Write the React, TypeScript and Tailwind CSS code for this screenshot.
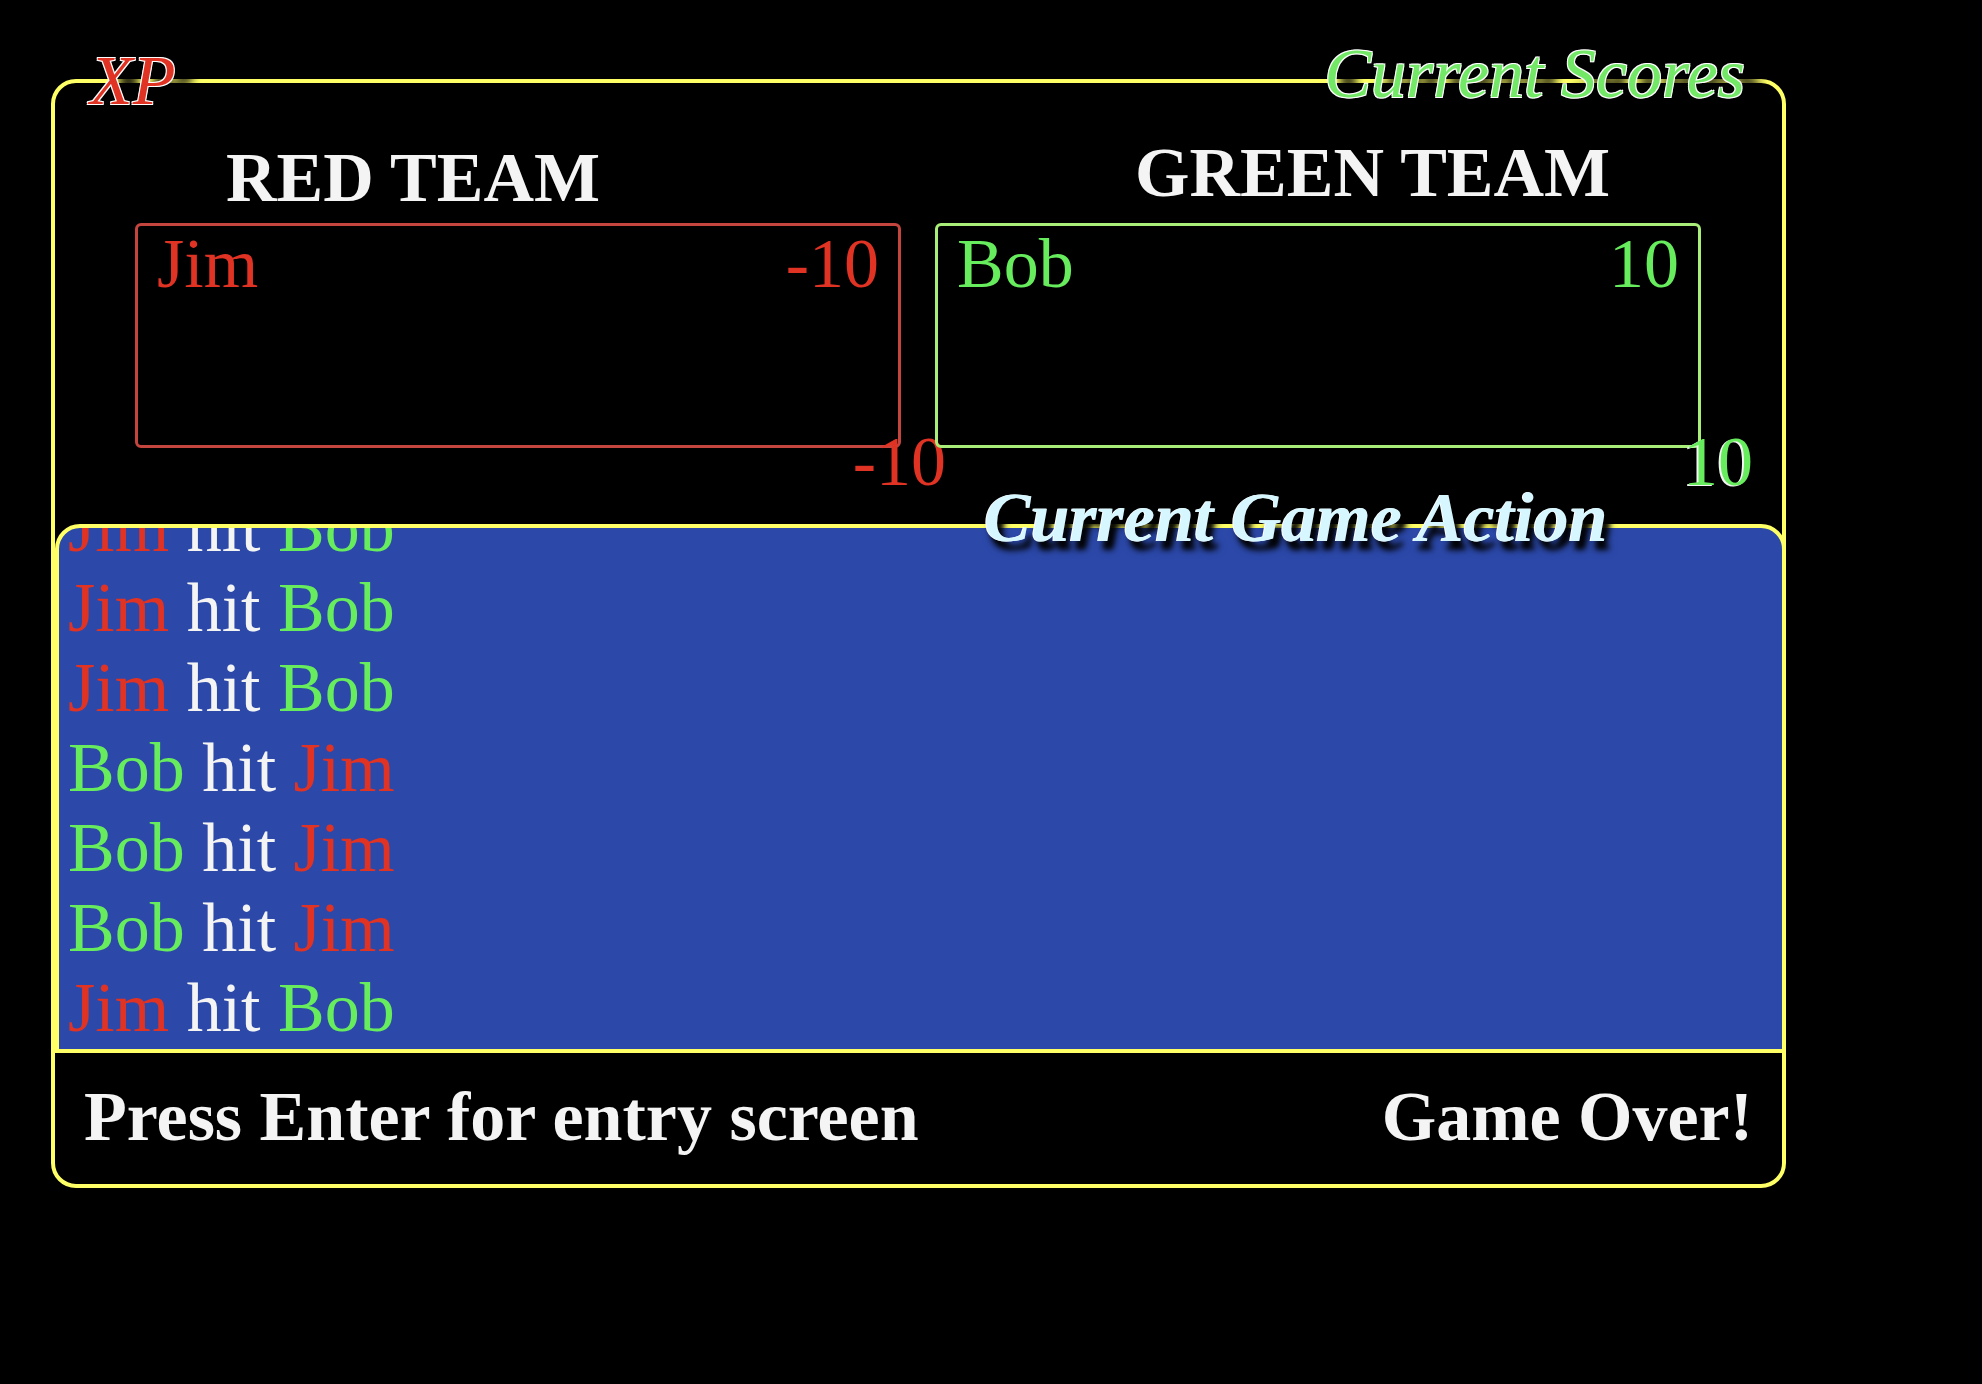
const RED = "text-[#e03324]";
const GREEN = "text-[#66ec5c]";
const WHITE = "text-[#f4f4f4]";

// newest hit is at the bottom; the list is pinned to the bottom of the panel
const hits: Array<[string, string]> = [
  ["Bob", "Jim"],
  ["Jim", "Bob"],
  ["Jim", "Bob"],
  ["Jim", "Bob"],
  ["Bob", "Jim"],
  ["Bob", "Jim"],
  ["Bob", "Jim"],
  ["Jim", "Bob"],
];

const teamColor = (name: string) => (name === "Jim" ? RED : GREEN);

function TeamColumn({
  title,
  player,
  score,
  total,
  headPad,
  boxBorder,
  color,
  totalClass,
}: {
  title: string;
  player: string;
  score: string;
  total: string;
  headPad: string;
  boxBorder: string;
  color: string;
  totalClass: string;
}) {
  return (
    <div className={`flex w-[766px] flex-col ${headPad}`}>
      <div className={`font-bold ${WHITE} whitespace-nowrap`}>{title}</div>
      <div
        className={`flex h-[225px] justify-between rounded-[6px] border-[3px] px-[19px] leading-[76px] ${boxBorder} ${color}`}
      >
        <span>{player}</span>
        <span>{score}</span>
      </div>
      <div className={`-mt-[26px] flex justify-end whitespace-nowrap ${totalClass}`}>
        {total}
      </div>
    </div>
  );
}

export default function App() {
  return (
    <div className="min-h-[1384px] w-full bg-black pl-[51px] pt-[79px] font-['Liberation_Serif','Times_New_Roman',Times,serif] text-[70px] leading-[80px]">
      <div className="relative w-[1735px] rounded-[25px] border-4 border-[#ffff66]">
        <span className="absolute -top-[42px] left-[35px] italic text-[#e03324] [text-shadow:-1px_1px_0_#fff,1px_-1px_0_#fff,-1px_-1px_0_#fff,1px_1px_0_#fff,16px_2px_12px_#000,16px_2px_12px_#000]">
          XP
        </span>
        <span className="absolute -top-[49px] right-[37px] italic text-[#72e866] [text-shadow:-1px_1px_0_#fff,1px_-1px_0_#fff,-1px_-1px_0_#fff,1px_1px_0_#fff,16px_2px_12px_#000,16px_2px_12px_#000]">
          Current Scores
        </span>

        <div className="flex h-[441px] gap-[34px] pl-[80px]">
          <TeamColumn
            title="RED TEAM"
            player="Jim"
            score="-10"
            total="-10"
            headPad="pt-[55px] [&>div:first-child]:pl-[91px] [&>div:nth-child(2)]:mt-[5px]"
            boxBorder="border-[#c4453e]"
            color={RED}
            totalClass={`-mr-[45px] ${RED}`}
          />
          <TeamColumn
            title="GREEN TEAM"
            player="Bob"
            score="10"
            total="10"
            headPad="pt-[50px] [&>div:first-child]:pl-[200px] [&>div:nth-child(2)]:mt-[10px]"
            boxBorder="border-[#a8ee78]"
            color={GREEN}
            totalClass={`-mr-[52px] ${GREEN} [text-shadow:-2px_1px_0_#f4f4f4]`}
          />
        </div>

        <div className="relative -mr-[4px] h-[529px] rounded-t-[25px] border-4 border-[#ffff66] bg-[#2c49aa]">
          <div className="flex h-full flex-col justify-end overflow-hidden rounded-t-[21px] pb-[1px] pl-[9px]">
            {hits.map(([a, b], i) => (
              <div key={i} className="whitespace-nowrap">
                <span className={teamColor(a)}>{a}</span>{" "}
                <span className={WHITE}>hit</span>{" "}
                <span className={teamColor(b)}>{b}</span>
              </div>
            ))}
          </div>
          <span className="absolute -top-[50px] left-[925px] whitespace-nowrap font-bold italic text-[#d6f7ff] [text-shadow:-1px_0_0_#fff,5px_8px_5px_rgba(0,0,0,0.9),5px_8px_8px_rgba(0,0,0,0.8)]">
            Current Game Action
          </span>
        </div>

        <div className={`flex h-[131px] items-start justify-between px-[29px] pt-[24px] font-bold ${WHITE}`}>
          <span>Press Enter for entry screen</span>
          <span>Game Over!</span>
        </div>
      </div>
    </div>
  );
}
